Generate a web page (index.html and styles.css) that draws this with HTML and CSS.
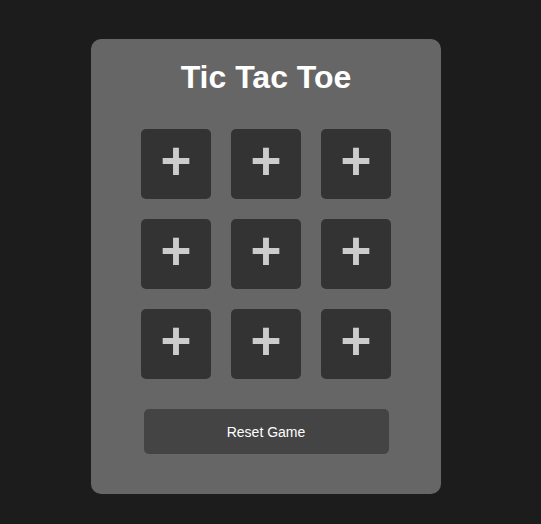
FILE: index.html
```html
<!DOCTYPE html>
<html>
<head>
<meta charset="utf-8">
<link rel="stylesheet" href="styles.css">
</head>
<body>
<div class="card">
  <h1 class="title">Tic Tac Toe</h1>
  <div class="board">
    <div class="cell">+</div>
    <div class="cell">+</div>
    <div class="cell">+</div>
    <div class="cell">+</div>
    <div class="cell">+</div>
    <div class="cell">+</div>
    <div class="cell">+</div>
    <div class="cell">+</div>
    <div class="cell">+</div>
  </div>
  <button class="reset">Reset Game</button>
</div>
</body>
</html>
```
FILE: styles.css
```css
html, body {
  margin: 0;
  padding: 0;
}
body {
  background: #1c1c1c;
  font-family: "Liberation Sans", Arial, sans-serif;
  display: flex;
  justify-content: center;
  align-items: flex-start;
  padding-top: 39px;
  padding-right: 9px;
  min-height: 524px;
  box-sizing: border-box;
}
.card {
  width: 350px;
  box-sizing: border-box;
  background: #666;
  border-radius: 10px;
  padding: 20px 0 40px;
  display: flex;
  flex-direction: column;
  align-items: center;
}
.title {
  margin: 0;
  color: #fff;
  font-size: 32px;
  font-weight: bold;
  line-height: 37px;
}
.board {
  margin-top: 33px;
  display: grid;
  grid-template-columns: repeat(3, 70px);
  grid-auto-rows: 70px;
  gap: 20px;
}
.cell {
  background: #333;
  border-radius: 5px;
  color: #ccc;
  font-size: 53px;
  font-weight: bold;
  display: flex;
  align-items: center;
  justify-content: center;
  line-height: 1;
  padding-bottom: 8px;
  box-sizing: border-box;
}
.reset {
  margin-top: 30px;
  width: 245px;
  height: 45px;
  background: #444;
  color: #fff;
  border: none;
  border-radius: 5px;
  font-family: "Liberation Sans", Arial, sans-serif;
  font-size: 14px;
  padding: 0;
}
```
